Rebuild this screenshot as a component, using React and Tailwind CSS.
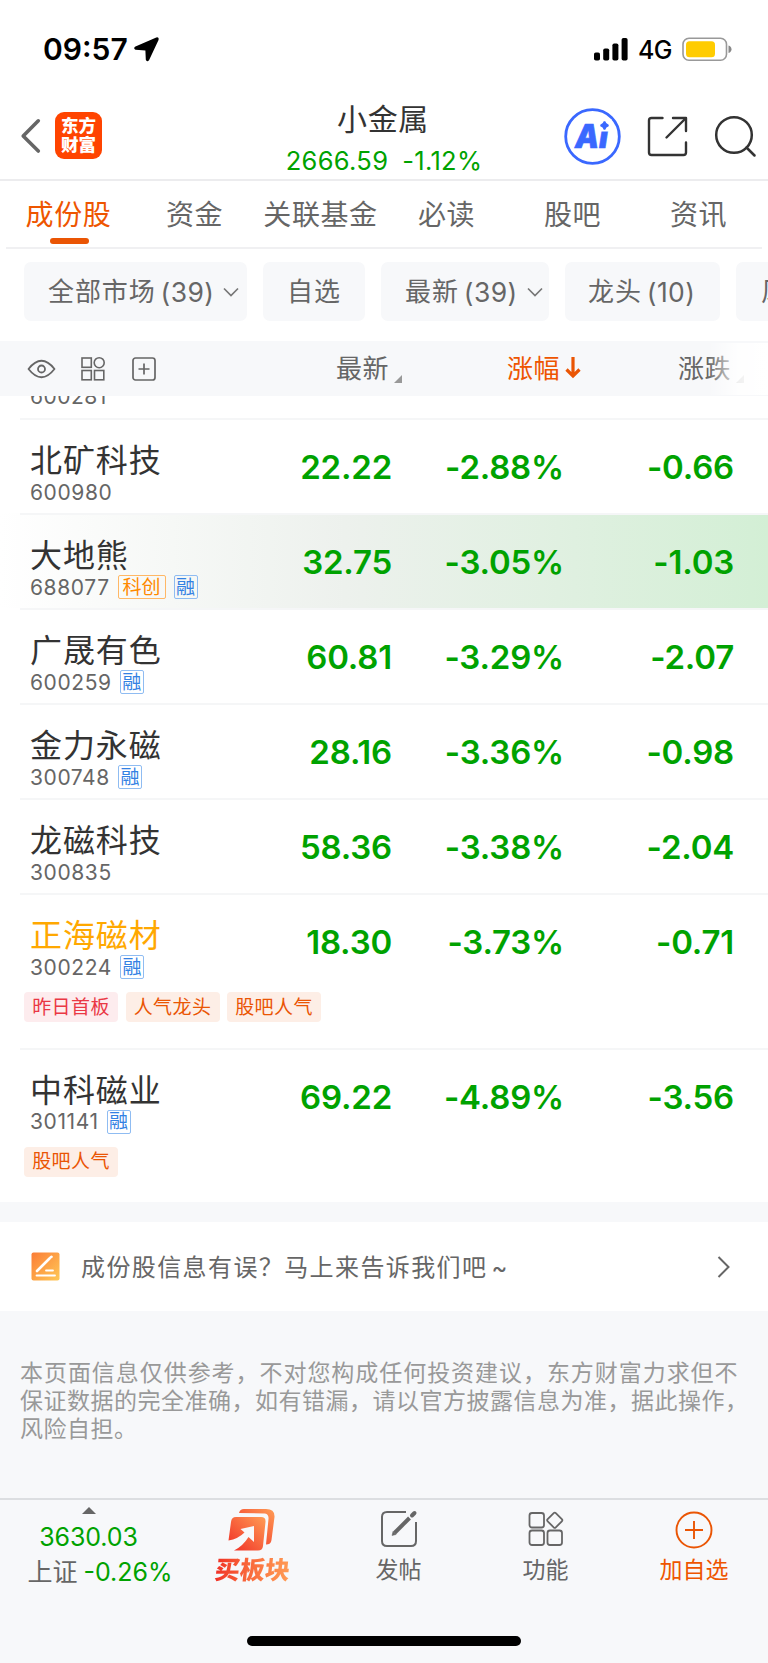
import React from 'react';
import { clsx } from 'clsx';

const tabs = ['成份股', '资金', '关联基金', '必读', '股吧', '资讯'];

const filters = [
  { name: '全部市场', count: 39, arrow: true, width: 'w-[223px] pl-6' },
  { name: '自选', width: 'w-[102px] pl-6' },
  { name: '最新', count: 39, arrow: true, width: 'w-[168px] pl-6' },
  { name: '龙头', count: 10, width: 'w-[155px] pl-[23px]' },
  { name: '风', width: 'w-[100px] pl-[25px]' },
];

const stocks = [
  { name: '北矿科技', code: '600980', price: '22.22', pct: '-2.88%', change: '-0.66' },
  { name: '大地熊', code: '688077', price: '32.75', pct: '-3.05%', change: '-1.03', star: true, margin: true, active: true },
  { name: '广晟有色', code: '600259', price: '60.81', pct: '-3.29%', change: '-2.07', margin: true },
  { name: '金力永磁', code: '300748', price: '28.16', pct: '-3.36%', change: '-0.98', margin: true },
  { name: '龙磁科技', code: '300835', price: '58.36', pct: '-3.38%', change: '-2.04' },
  {
    name: '正海磁材', code: '300224', price: '18.30', pct: '-3.73%', change: '-0.71', margin: true, watched: true,
    labels: [{ text: '昨日首板', red: true }, { text: '人气龙头' }, { text: '股吧人气' }],
  },
  {
    name: '中科磁业', code: '301141', price: '69.22', pct: '-4.89%', change: '-3.56', margin: true,
    labels: [{ text: '股吧人气' }],
  },
];

const disclaimer = [
  { text: '本页面信息仅供参考，不对您构成任何投资建议，东方财富力求但不', spacing: 'tracking-[0.95px]' },
  { text: '保证数据的完全准确，如有错漏，请以官方披露信息为准，据此操作，', spacing: 'tracking-[0.5px]' },
  { text: '风险自担。', spacing: 'tracking-[0.5px]' },
];

const StatusBar = () => (
  <div className="flex h-[92px] items-center justify-between pl-[43px] pr-[36px] pt-[6px] text-black">
    <div className="flex items-center gap-[6px]">
      <span className="text-[30px] leading-none font-semibold">09:57</span>
      <svg width="25" height="25" viewBox="0 0 25 25">
        <path d="M22.6 1.2 L1.8 10.2 Q0.2 11.2 1.8 12 L11.6 12.6 Q12.2 12.7 12.2 13.4 L12.6 22.6 Q13.2 24.4 14.3 22.8 L23.8 2.6 Q24.2 0.8 22.6 1.2 Z" fill="#000" stroke="#000" strokeWidth="1.6" strokeLinejoin="round" />
      </svg>
    </div>
    <div className="flex items-center">
      <svg width="34" height="23" viewBox="0 0 34 23">
        <rect x="0" y="14.5" width="6" height="8" rx="1.8" />
        <rect x="9.2" y="10.5" width="6" height="12" rx="1.8" />
        <rect x="18.4" y="5.5" width="6" height="17" rx="1.8" />
        <rect x="27.6" y="0" width="6" height="22.5" rx="1.8" />
      </svg>
      <span className="ml-[10px] pt-[2px] text-[25px] leading-none font-medium tracking-[-0.5px]">4G</span>
      <svg className="ml-[10px]" width="50" height="25" viewBox="0 0 50 25">
        <rect x="1" y="1.2" width="43.5" height="22" rx="6" fill="none" stroke="#999" strokeWidth="1.6" />
        <rect x="4" y="4.2" width="29" height="16" rx="3.5" fill="#ffcc00" />
        <path d="M46.5 8.5 Q49.5 9.5 49.5 12.2 Q49.5 15 46.5 16 Z" fill="#888" />
      </svg>
    </div>
  </div>
);

const Header = () => (
  <header className="relative flex h-[89px] items-center border-b-2 border-[#ececee] pl-[20px] pr-[10px]">
    <svg width="22" height="36" viewBox="0 0 22 36" fill="none" stroke="#666" strokeWidth="3.6" strokeLinecap="round" strokeLinejoin="round">
      <path d="M18.3 2.8 L3.2 18 L18.3 33" />
    </svg>
    <div className="ml-[13px] flex h-[47px] w-[47px] flex-col items-center justify-center rounded-[9px] bg-[#ff4400] text-[17.5px] leading-[18.5px] font-black text-white">
      <span>东方</span>
      <span>财富</span>
    </div>
    <div className="absolute inset-x-0 top-0 flex flex-col items-center">
      <h1 className="mt-[11px] mr-[2px] text-[30px] leading-[32px] tracking-[0.6px] text-[#333]">小金属</h1>
      <div className="mt-[12px] flex gap-[14px] text-[25.5px] leading-[28px] tracking-[0.3px] text-[#00a200]">
        <span>2666.59</span>
        <span>-1.12%</span>
      </div>
    </div>
    <div className="ml-auto flex items-center pt-px">
      <svg width="57" height="57" viewBox="0 0 57 57">
        <circle cx="28.5" cy="28.5" r="26.8" fill="none" stroke="#3a68ff" strokeWidth="2.8" />
        <text x="11" y="40" fontSize="33" fontWeight="900" fontStyle="italic" fill="#3a68ff" stroke="#3a68ff" strokeWidth="0.6" textLength="33" lengthAdjust="spacingAndGlyphs">Ai</text>
        <rect x="34.5" y="11" width="13" height="12.5" fill="#fff" />
        <path d="M40.5 13.5 Q41.3 16.7 44.5 17.5 Q41.3 18.3 40.5 21.5 Q39.7 18.3 36.5 17.5 Q39.7 16.7 40.5 13.5 Z" fill="#3a68ff" stroke="#3a68ff" strokeWidth="1.6" />
      </svg>
      <svg className="ml-[26px]" width="41" height="41" viewBox="0 0 41 41" fill="none" stroke="#333" strokeWidth="2.4" strokeLinecap="round" strokeLinejoin="round">
        <path d="M15.5 2 H4.5 Q2 2 2 4.5 V36.5 Q2 39 4.5 39 H36.5 Q39 39 39 36.5 V26.5" />
        <path d="M26 2 H39 V15" />
        <path d="M38.5 2.5 L19.5 21.5" />
      </svg>
      <svg className="ml-[26px] mr-px" width="43" height="43" viewBox="0 0 43 43" fill="none" stroke="#333" strokeWidth="2.5" strokeLinecap="round">
        <circle cx="20" cy="20" r="17.8" />
        <path d="M32.5 32.5 L40.5 40.5" />
      </svg>
    </div>
  </header>
);

const Tabs = () => (
  <nav className="mx-[6px] grid h-[68px] grid-cols-6 border-b-2 border-[#f0f0f2]">
    {tabs.map((tab, i) => (
      <div
        key={tab}
        className={clsx(
          'flex flex-col items-center pt-[17px] text-[28px] leading-[34px] tracking-[0.6px] whitespace-nowrap',
          i === 0 ? 'text-[#ee5500]' : 'text-[#666]'
        )}
      >
        <span className="-ml-px">{tab}</span>
        {i === 0 && <span className="mt-[6px] h-[6px] w-[39px] rounded-full bg-[#ea5504]" />}
      </div>
    ))}
  </nav>
);

const Filters = () => (
  <div className="flex h-[92px] gap-[16px] overflow-hidden pt-[13px] pl-[24px]">
    {filters.map((f) => (
      <div
        key={f.name}
        className={clsx('flex h-[59px] shrink-0 items-center rounded-[7px] bg-[#f7f8fa] pt-px text-[26px] leading-none text-[#666]', f.width)}
      >
        <span className="tracking-[0.9px]">{f.name}</span>
        {f.count && <span className="ml-[5px] text-[26.5px] tracking-[0.4px]">({f.count})</span>}
        {f.arrow && (
          <svg className="ml-[9px]" width="16" height="11" viewBox="0 0 16 11" fill="none" stroke="#777" strokeWidth="1.7">
            <path d="M1 1.5 L8 8.5 L15 1.5" />
          </svg>
        )}
      </div>
    ))}
  </div>
);

const Corner = ({ className }) => (
  <svg className={className} width="8" height="8" viewBox="0 0 8 8">
    <path d="M8 0 V8 H0 Z" fill="#999" />
  </svg>
);

const ColumnHeader = () => (
  <div className="relative flex h-[55px] items-center bg-[#f7f8fa] pl-[27px] pt-px text-[26px] leading-none tracking-[0.6px] text-[#666]">
    <div className="flex w-[309px] items-center pb-px">
      <svg width="29" height="20" viewBox="0 0 29 20" fill="none" stroke="#666" strokeWidth="1.8">
        <path d="M1.5 10 Q14.5 -6.5 27.5 10 Q14.5 26.5 1.5 10 Z" strokeLinejoin="round" />
        <circle cx="14.5" cy="10" r="3.5" />
      </svg>
      <svg className="ml-[24px]" width="26" height="26" viewBox="0 0 26 26" fill="none" stroke="#666" strokeWidth="1.6">
        <rect x="2" y="2" width="9.3" height="9.3" />
        <circle cx="19.2" cy="6.7" r="5" />
        <rect x="2" y="14.5" width="9.3" height="9.3" />
        <rect x="14.5" y="14.5" width="9.3" height="9.3" />
      </svg>
      <svg className="ml-[25px]" width="26" height="26" viewBox="0 0 26 26" fill="none" stroke="#666" strokeWidth="1.7">
        <rect x="2" y="2" width="22" height="22" rx="2.5" />
        <path d="M13 7.5 V18.5 M7.5 13 H18.5" />
      </svg>
    </div>
    <div className="flex w-[171px] items-center">
      最新
      <Corner className="mt-[20px] ml-[5px]" />
    </div>
    <div className="flex w-[171px] items-center text-[#ee5500]">
      涨幅
      <svg className="mb-[2px] ml-[5px]" width="16" height="22" viewBox="0 0 16 22" fill="none" stroke="#ea5504" strokeWidth="3.2">
        <path d="M8 0 V19 M1.5 12.5 L8 19 L14.5 12.5" />
      </svg>
    </div>
    <div className="flex items-center">
      涨跌
      <Corner className="mt-[20px] ml-[5px]" />
    </div>
    <div className="absolute top-[2px] right-0 h-[52px] w-[60px] bg-linear-to-r from-white/0 via-white/85 via-50% to-white" />
  </div>
);

const StockRow = ({ stock }) => (
  <div
    className={clsx(
      stock.labels ? 'h-[154.5px]' : 'h-[95px]',
      stock.active && 'bg-linear-to-r from-white via-[#edf1ed] via-45% to-[#d3efd5]'
    )}
  >
    <div className="ml-[20px] border-t-2 border-[#f5f6f7]" />
    <div className="flex h-[93px] pl-[30px]">
      <div className="w-[211px] pt-[23px]">
        <div className={clsx('text-[32px] leading-[36px] tracking-[0.9px]', stock.watched ? 'text-[#ffa800]' : 'text-[#333]')}>
          {stock.name}
        </div>
        <div className="mt-[1px] flex h-[24px] items-center text-[21px] leading-none tracking-[0.6px] text-[#666]">
          <span>{stock.code}</span>
          {stock.star && (
            <span className="ml-[8px] flex h-[24px] w-[48px] items-center justify-center rounded-[2px] border border-[#ffb866] text-[19px] tracking-normal text-[#ff8a00]">科创</span>
          )}
          {stock.margin && (
            <span className="ml-[8px] flex h-[24px] w-[24px] items-center justify-center rounded-[2px] border border-[#8fbcf2] text-[19px] tracking-normal text-[#3381e3]">融</span>
          )}
        </div>
      </div>
      <div className="flex pt-[29px] text-right text-[33px] leading-[36px] font-semibold tracking-[-0.2px] text-[#00a200]">
        <span className="w-[151px]">{stock.price}</span>
        <span className="w-[172px]">{stock.pct}</span>
        <span className="w-[170px]">{stock.change}</span>
      </div>
    </div>
    {stock.labels && (
      <div className="mt-[4px] flex gap-[7.5px] pl-[24px]">
        {stock.labels.map((label) => (
          <span
            key={label.text}
            className={clsx(
              'flex h-[30px] w-[94px] items-center justify-center rounded-[4px] text-[19px] leading-none tracking-[0.4px]',
              label.red ? 'bg-[#fdecee] text-[#ea3845]' : 'bg-[#fdeee6] text-[#ea5504]'
            )}
          >
            {label.text}
          </span>
        ))}
      </div>
    )}
  </div>
);

const BottomBar = () => (
  <footer className="h-[165px] border-t-2 border-[#dcdee1] text-[23px] leading-[28px] text-[#666]">
    <div className="flex h-[136px]">
      <div className="flex w-[177px] flex-col items-center pt-[7px]">
        <svg width="14" height="7" viewBox="0 0 14 7">
          <path d="M7 0 L14 7 H0 Z" fill="#666" />
        </svg>
        <span className="mt-[9px] text-[25px] tracking-[-0.1px] text-[#00a200]">3630.03</span>
        <span className="mt-[7px] flex gap-[6px] pl-[23px] whitespace-nowrap">
          <span className="text-[25px]">上证</span>
          <span className="text-[25px] text-[#00a200]">-0.26%</span>
        </span>
      </div>
      <div className="flex w-[149px] flex-col items-center pt-[8px]">
        <svg width="48" height="44" viewBox="0 0 48 44">
          <defs>
            <linearGradient id="buy" x1="0" y1="1" x2="1" y2="0">
              <stop offset="0" stopColor="#f02d25" />
              <stop offset="1" stopColor="#ff9c55" />
            </linearGradient>
          </defs>
          <path d="M11 5 Q12 1 16 1 H38 Q47 1 46.5 9 L43.5 32 Q43 36.5 38 36.5 L40.5 11 Q41 6.5 37 5.5 Z" fill="url(#buy)" />
          <path d="M8 9 H33 Q38 9 37.5 14 L35 38 Q34.5 42.5 30 42.5 H6 Q15 38 20.5 29 L26 34 V18 L12.5 21 L16.5 24.5 Q10 31 0.5 32.5 L3 14 Q3.5 9 8 9 Z" fill="url(#buy)" />
        </svg>
        <span className="mt-[4px] ml-[2px] -skew-x-6 bg-linear-to-r from-[#f02d25] to-[#ff9c55] bg-clip-text text-[25px] font-black text-transparent">买板块</span>
      </div>
      <div className="flex w-[145px] flex-col items-center pt-[10px]">
        <svg width="38" height="38" viewBox="0 0 38 38" fill="none" stroke="#666" strokeWidth="2">
          <path d="M26 2 H7 Q2 2 2 7 V31 Q2 36 7 36 H31 Q36 36 36 31 V12" />
          <path d="M14.5 23 L29.5 8" strokeWidth="4" />
          <path d="M12 25.5 L13 21.5 L16 24.5 Z" fill="#666" strokeWidth="0.5" />
          <path d="M32 5.5 L34.5 3" strokeWidth="4" strokeLinecap="round" />
        </svg>
        <span className="mt-[8px]">发帖</span>
      </div>
      <div className="flex w-[149px] flex-col items-center pt-[10px]">
        <svg width="38" height="38" viewBox="0 0 38 38" fill="none" stroke="#666" strokeWidth="1.8">
          <rect x="2.5" y="3" width="14.5" height="14.5" rx="2.5" />
          <rect x="2.5" y="20.5" width="14.5" height="14.5" rx="2.5" />
          <rect x="20.5" y="20.5" width="14.5" height="14.5" rx="2.5" />
          <rect x="22" y="4.5" width="11.5" height="11.5" rx="1.5" transform="rotate(45 27.75 10.25)" />
        </svg>
        <span className="mt-[8px]">功能</span>
      </div>
      <div className="flex w-[148px] flex-col items-center pt-[11px] text-[#ee5500]">
        <svg width="38" height="38" viewBox="0 0 38 38" fill="none" stroke="#ea5504" strokeWidth="1.9">
          <circle cx="19" cy="19" r="17.5" />
          <path d="M19 10 V28 M10 19 H28" />
        </svg>
        <span className="mt-[7px]">加自选</span>
      </div>
    </div>
    <div className="mx-auto h-[10px] w-[274px] rounded-full bg-black" />
  </footer>
);

export default function App() {
  return (
    <div className="flex h-[1663px] w-[768px] flex-col overflow-hidden bg-[#f7f8fa] font-['Inter','Noto_Sans_CJK_SC',sans-serif]">
      <div className="bg-white">
        <StatusBar />
        <Header />
        <Tabs />
        <Filters />
        <ColumnHeader />
        {/* Row scrolled under the column header */}
        <div className="flex h-[22px] items-end overflow-hidden pb-[8px] pl-[30px] text-[21px] leading-[26px] tracking-[0.5px] text-[#666]">600281</div>
        {stocks.map((stock) => (
          <StockRow key={stock.code} stock={stock} />
        ))}
      </div>

      {/* Feedback */}
      <div className="mt-[20px] flex h-[89px] items-center bg-white pr-[37px] pl-[31px]">
        <svg width="29" height="29" viewBox="0 0 29 29">
          <defs>
            <linearGradient id="note" x1="0" y1="0" x2="1" y2="1">
              <stop offset="0" stopColor="#fb7c36" />
              <stop offset="1" stopColor="#ffc957" />
            </linearGradient>
          </defs>
          <rect x="0.5" y="0.5" width="28" height="28" rx="2" fill="url(#note)" />
          <path d="M6 19 L18.5 6.5 M19.5 5.5 L20.5 4.8" stroke="#fff" strokeWidth="2.6" strokeLinecap="round" />
          <path d="M15 18.5 H22 M5.5 23.5 H24" stroke="#fff" strokeWidth="1.8" strokeLinecap="round" />
        </svg>
        <span className="ml-[21px] pt-[2px] text-[24px] leading-[30px] tracking-[1.4px] whitespace-nowrap text-[#666]">
          成份股信息有误？马上来告诉我们吧<span className="ml-[4px]">~</span>
        </span>
        <svg className="ml-auto" width="15" height="24" viewBox="0 0 15 24" fill="none" stroke="#666" strokeWidth="2">
          <path d="M2.5 2 L12.5 12 L2.5 22" />
        </svg>
      </div>

      <div className="pt-[48px] pl-[20px] text-[23px] leading-[28px] whitespace-nowrap text-[#999]">
        {disclaimer.map((line) => (
          <p key={line.text} className={line.spacing}>{line.text}</p>
        ))}
      </div>

      <div className="mt-auto">
        <BottomBar />
      </div>
    </div>
  );
}
